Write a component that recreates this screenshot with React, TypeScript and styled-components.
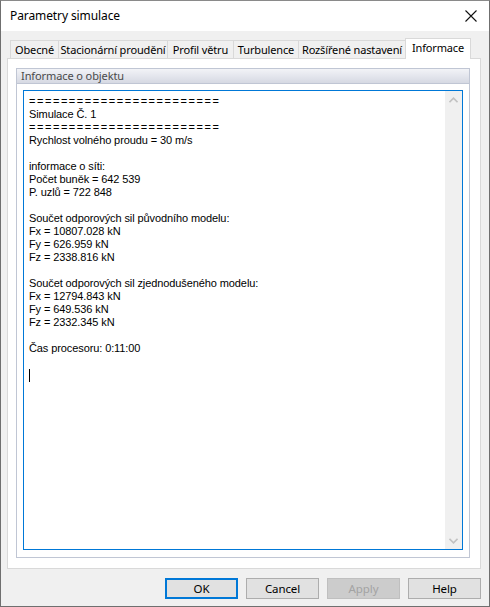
import React from "react";
import styled, { createGlobalStyle } from "styled-components";

const Global = createGlobalStyle`
  html, body { margin: 0; padding: 0; background: #ffffff; }
  * { box-sizing: border-box; }
`;

const UI_FONT = `"Noto Sans", "Open Sans", Arial, sans-serif`;

const Window = styled.div`
  width: 490px;
  height: 607px;
  border: 1px solid #6f6f6f;
  border-top-color: #8a8a8a;
  background: #f0f0f0;
  display: flex;
  flex-direction: column;
  font-family: ${UI_FONT};
  color: #000;
`;

const TitleBar = styled.div`
  height: 30px;
  background: #ffffff;
  display: flex;
  align-items: center;
  justify-content: space-between;
  padding: 0 10px 1px 9px;
  flex: none;
`;

const Title = styled.span`
  font-size: 12px;
  letter-spacing: -0.1px;
`;

const CloseBtn = styled.div`
  width: 14px;
  height: 14px;
  margin-right: 1px;
  display: flex;
`;

const Body = styled.div`
  flex: 1;
  display: flex;
  flex-direction: column;
  padding: 7px 8px 8px 6px;
`;

const TabStrip = styled.div`
  display: flex;
  align-items: flex-end;
  height: 20px;
  padding-left: 3px;
  position: relative;
  z-index: 1;
`;

const Tab = styled.div<{ $w: number; $active?: boolean }>`
  width: ${(p) => p.$w}px;
  height: ${(p) => (p.$active ? 21 : 18)}px;
  margin-bottom: ${(p) => (p.$active ? -1 : 0)}px;
  margin-left: -1px;
  border: 1px solid #d9d9d9;
  border-bottom: none;
  background: ${(p) => (p.$active ? "#ffffff" : "#f0f0f0")};
  font-size: 11px;
  letter-spacing: -0.15px;
  display: flex;
  align-items: center;
  justify-content: center;
  padding-bottom: ${(p) => (p.$active ? 3 : 1)}px;
  white-space: nowrap;
  &:first-child { margin-left: 0; }
`;

const Panel = styled.div`
  width: 474px;
  height: 511px;
  border: 1px solid #d9d9d9;
  background: #ffffff;
  padding: 9px 10px 10px 8px;
  display: flex;
`;

const GroupBox = styled.div`
  flex: 1;
  border: 1px solid #c0c6d4;
  display: flex;
  flex-direction: column;
`;

const GroupHeader = styled.div`
  height: 15px;
  background: linear-gradient(#f2f3f7, #d6d9e3);
  border-bottom: 1px solid #c0c6d4;
  font-size: 11px;
  letter-spacing: -0.1px;
  color: #4a4a4a;
  padding-left: 4px;
  line-height: 13px;
`;

const GroupContent = styled.div`
  flex: 1;
  padding: 6px 6px 7px 6px;
  display: flex;
`;

const TextArea = styled.div`
  flex: 1;
  border: 1px solid #0078d7;
  display: flex;
  background: #fff;
`;

const TextContent = styled.div`
  flex: 1;
  padding: 4px 5px;
  font-family: "Liberation Sans", Arial, sans-serif;
  font-size: 11px;
  line-height: 13px;
  letter-spacing: -0.1px;
  color: #000;
  white-space: pre;
`;

const Line = styled.div`
  height: 13px;
`;

const Rule = styled.div`
  height: 13px;
  letter-spacing: 1.55px;
`;

const Caret = styled.div`
  width: 1px;
  height: 13px;
  background: #000;
  margin-top: 1px;
`;

const ScrollBar = styled.div`
  width: 17px;
  background: #f0f0f0;
  display: flex;
  flex-direction: column;
  justify-content: space-between;
`;

const ScrollArrow = styled.div`
  height: 17px;
  display: flex;
  align-items: center;
  justify-content: center;
`;

const ButtonRow = styled.div`
  display: flex;
  justify-content: flex-end;
  gap: 8px;
  margin-top: 9px;
`;

const Button = styled.div<{ $default?: boolean; $disabled?: boolean }>`
  width: 73px;
  height: 21px;
  background: ${(p) => (p.$disabled ? "#cccccc" : "#e1e1e1")};
  border: ${(p) => (p.$default ? "2px solid #0078d7" : p.$disabled ? "1px solid #bfbfbf" : "1px solid #adadad")};
  color: ${(p) => (p.$disabled ? "#a3a3a3" : "#000")};
  font-size: 11.5px;
  letter-spacing: -0.1px;
  display: flex;
  align-items: center;
  justify-content: center;
  padding-bottom: 1px;
`;

const tabs = [
  { label: "Obecné", w: 49 },
  { label: "Stacionární proudění", w: 110 },
  { label: "Profil větru", w: 67 },
  { label: "Turbulence", w: 66 },
  { label: "Rozšířené nastavení", w: 108 },
  { label: "Informace", w: 66, active: true },
];

const RULE = "========================";

const lines: string[] = [
  "RULE",
  "Simulace Č. 1",
  "RULE",
  "Rychlost volného proudu = 30 m/s",
  "",
  "informace o síti:",
  "Počet buněk = 642 539",
  "P. uzlů = 722 848",
  "",
  "Součet odporových sil původního modelu:",
  "Fx = 10807.028 kN",
  "Fy = 626.959 kN",
  "Fz = 2338.816 kN",
  "",
  "Součet odporových sil zjednodušeného modelu:",
  "Fx = 12794.843 kN",
  "Fy = 649.536 kN",
  "Fz = 2332.345 kN",
  "",
  "Čas procesoru: 0:11:00",
  "",
];

const Chevron = ({ up }: { up?: boolean }) => (
  <svg width="9" height="6" viewBox="0 0 9 6">
    <path
      d={up ? "M0.5 5.2 L4.5 1.2 L8.5 5.2" : "M0.5 0.8 L4.5 4.8 L8.5 0.8"}
      fill="none"
      stroke="#c2c2c2"
      strokeWidth="1.6"
    />
  </svg>
);

export default function App() {
  return (
    <>
      <Global />
      <Window>
        <TitleBar>
          <Title>Parametry simulace</Title>
          <CloseBtn>
            <svg width="14" height="14" viewBox="0 0 14 14">
              <path d="M1.5 1.5 L12.5 12.5 M12.5 1.5 L1.5 12.5" stroke="#111" strokeWidth="1.1" />
            </svg>
          </CloseBtn>
        </TitleBar>
        <Body>
          <TabStrip>
            {tabs.map((t) => (
              <Tab key={t.label} $w={t.w} $active={t.active}>
                {t.label}
              </Tab>
            ))}
          </TabStrip>
          <Panel>
            <GroupBox>
              <GroupHeader>Informace o objektu</GroupHeader>
              <GroupContent>
                <TextArea>
                  <TextContent>
                    {lines.map((l, i) =>
                      l === "RULE" ? <Rule key={i}>{RULE}</Rule> : <Line key={i}>{l}</Line>
                    )}
                    <Caret />
                  </TextContent>
                  <ScrollBar>
                    <ScrollArrow>
                      <Chevron up />
                    </ScrollArrow>
                    <ScrollArrow>
                      <Chevron />
                    </ScrollArrow>
                  </ScrollBar>
                </TextArea>
              </GroupContent>
            </GroupBox>
          </Panel>
          <ButtonRow>
            <Button $default>OK</Button>
            <Button>Cancel</Button>
            <Button $disabled>Apply</Button>
            <Button>Help</Button>
          </ButtonRow>
        </Body>
      </Window>
    </>
  );
}
